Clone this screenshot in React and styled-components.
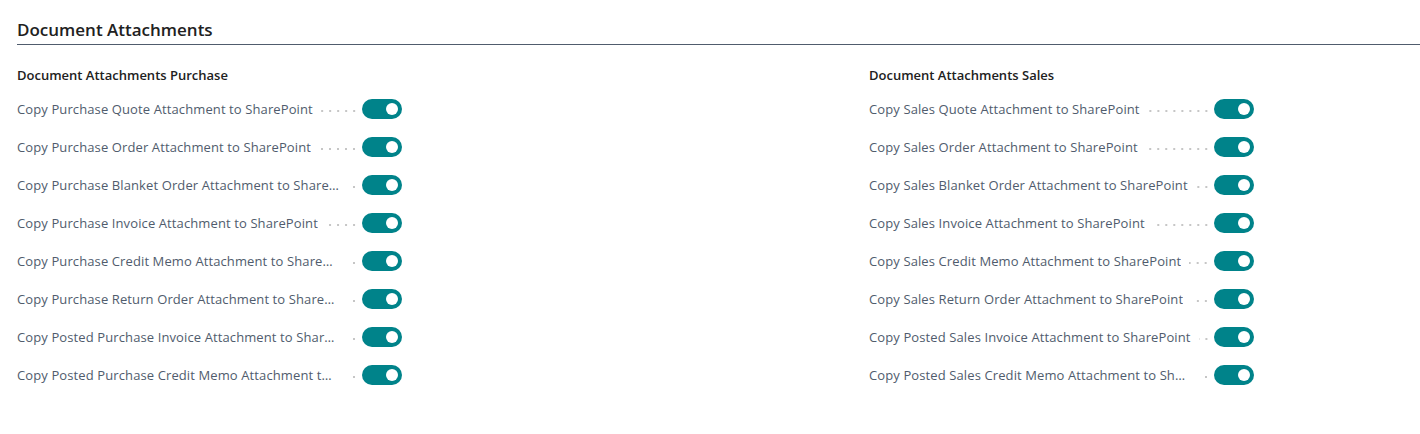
import React from 'react';
import styled, { createGlobalStyle } from 'styled-components';

const GlobalStyle = createGlobalStyle`
  html, body {
    margin: 0;
    padding: 0;
    background: #ffffff;
  }
  body {
    font-family: "Segoe UI", "Open Sans", "Noto Sans", sans-serif;
  }
`;

const purchase = [
  'Copy Purchase Quote Attachment to SharePoint',
  'Copy Purchase Order Attachment to SharePoint',
  'Copy Purchase Blanket Order Attachment to SharePoint',
  'Copy Purchase Invoice Attachment to SharePoint',
  'Copy Purchase Credit Memo Attachment to SharePoint',
  'Copy Purchase Return Order Attachment to SharePoint',
  'Copy Posted Purchase Invoice Attachment to SharePoint',
  'Copy Posted Purchase Credit Memo Attachment to SharePoint',
];

const sales = [
  'Copy Sales Quote Attachment to SharePoint',
  'Copy Sales Order Attachment to SharePoint',
  'Copy Sales Blanket Order Attachment to SharePoint',
  'Copy Sales Invoice Attachment to SharePoint',
  'Copy Sales Credit Memo Attachment to SharePoint',
  'Copy Sales Return Order Attachment to SharePoint',
  'Copy Posted Sales Invoice Attachment to SharePoint',
  'Copy Posted Sales Credit Memo Attachment to SharePoint',
];

const Page = styled.div`
  padding: 17px 0 0 17px;
`;

const SectionTitle = styled.h2`
  margin: 0;
  font-size: 17px;
  font-weight: 600;
  color: #212121;
  line-height: 26px;
  padding-bottom: 1px;
  border-bottom: 1px solid #505c6d;
`;

const Columns = styled.div`
  display: grid;
  grid-template-columns: 852px 1fr;
  padding-top: 18px;
`;

const Group = styled.div`
  display: flex;
  flex-direction: column;
`;

const GroupTitle = styled.div`
  font-size: 13px;
  font-weight: 600;
  color: #212121;
  line-height: 24px;
  margin-bottom: 3px;
`;

const Row = styled.div`
  display: flex;
  align-items: center;
  width: 385px;
  height: 38px;
`;

const Label = styled.span`
  font-size: 13px;
  letter-spacing: 0.11px;
  color: #505c6d;
  white-space: nowrap;
  overflow: hidden;
  text-overflow: ellipsis;
  max-width: 322px;
  line-height: 20px;
`;

const Leader = styled.span`
  flex: 1;
  min-width: 2px;
  height: 2px;
  margin: 3px 4px 0 8px;
  background-image: radial-gradient(circle, #c6c6c6 0.9px, transparent 1.1px);
  background-size: 8px 2px;
  background-position: right center;
  background-repeat: repeat-x;
`;

const Toggle = styled.span`
  flex: none;
  width: 40px;
  height: 20px;
  border-radius: 10px;
  background: ${p => (p.$on ? '#00838a' : '#ffffff')};
  border: ${p => (p.$on ? 'none' : '1px solid #605e5c')};
  display: flex;
  align-items: center;
  justify-content: ${p => (p.$on ? 'flex-end' : 'flex-start')};
  padding: 0 4px;
  box-sizing: border-box;
`;

const Knob = styled.span`
  width: 12px;
  height: 12px;
  border-radius: 50%;
  background: #ffffff;
`;

const Field = ({ label }) => (
  <Row>
    <Label title={label}>{label}</Label>
    <Leader />
    <Toggle $on>
      <Knob />
    </Toggle>
  </Row>
);

export default function App() {
  return (
    <>
      <GlobalStyle />
      <Page>
        <SectionTitle>Document Attachments</SectionTitle>
        <Columns>
          <Group>
            <GroupTitle>Document Attachments Purchase</GroupTitle>
            {purchase.map(l => <Field key={l} label={l} />)}
          </Group>
          <Group>
            <GroupTitle>Document Attachments Sales</GroupTitle>
            {sales.map(l => <Field key={l} label={l} />)}
          </Group>
        </Columns>
      </Page>
    </>
  );
}
